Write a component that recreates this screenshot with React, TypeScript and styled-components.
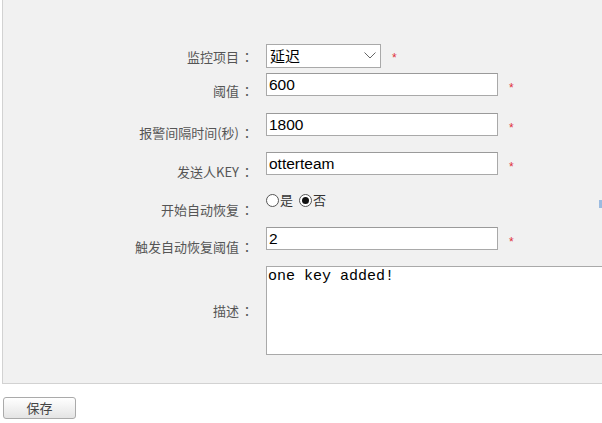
import React from "react";
import styled, { createGlobalStyle } from "styled-components";

const GlobalStyle = createGlobalStyle`
  html, body {
    margin: 0;
    padding: 0;
    background: #ffffff;
    overflow: hidden;
    font-family: "Noto Sans CJK SC", "Liberation Sans", sans-serif;
  }
  * { box-sizing: border-box; }
`;

const Page = styled.div`
  padding-left: 2px;
  width: 720px;
`;

const Panel = styled.div`
  width: 680px;
  background: #f1f1f1;
  border: 1px solid #d2d2d2;
  border-top: none;
  padding: 43px 0 28px 0;
`;

const Row = styled.div`
  display: grid;
  grid-template-columns: 252px 1fr;
  column-gap: 11px;
  align-items: center;
`;

const Label = styled.div<{ $shift?: number }>`
  text-align: right;
  font-family: "Noto Sans CJK SC", "Liberation Sans", sans-serif;
  font-size: 13px;
  line-height: 16px;
  color: #555555;
  white-space: nowrap;
  margin-bottom: ${(p) => p.$shift ?? 0}px;
`;

const Colon = styled.span`
  display: inline-block;
  width: 16px;
  text-align: center;
  font-family: "Noto Sans CJK TC", "Noto Sans CJK SC", sans-serif;
`;

const Field = styled.div<{ $pb: number }>`
  display: flex;
  align-items: flex-start;
  align-self: start;
  padding-bottom: ${(p) => p.$pb}px;
`;

const TextInput = styled.input`
  width: 232px;
  height: 23px;
  border: 1px solid #a9a9a9;
  border-top-color: #9a9a9a;
  background: #ffffff;
  padding: 0 2px;
  margin: 0;
  font-family: "Liberation Sans", Arial, sans-serif;
  font-size: 15.5px;
  color: #000000;
  outline: none;
`;

const SelectWrap = styled.div`
  position: relative;
  width: 115px;
  height: 24px;
`;

const Select = styled.select`
  appearance: none;
  -webkit-appearance: none;
  width: 115px;
  height: 24px;
  border: 1px solid #a9a9a9;
  background: #ffffff;
  padding: 0 3px;
  margin: 0;
  font-family: "Noto Sans CJK SC", "Liberation Sans", sans-serif;
  font-size: 15px;
  color: #000000;
  outline: none;
`;

const Chevron = styled.svg`
  position: absolute;
  right: 5px;
  top: 9px;
  width: 12px;
  height: 7px;
  pointer-events: none;
`;

const Required = styled.span`
  margin-left: 11px;
  padding-top: 9px;
  font-family: "Liberation Sans", Arial, sans-serif;
  font-size: 12px;
  line-height: 12px;
  color: #e0303a;
`;

const RadioGroup = styled.div`
  display: flex;
  align-items: center;
  height: 16px;
`;

const RadioLabel = styled.label`
  display: flex;
  align-items: center;
  margin-right: 6px;
  font-family: "Noto Sans CJK SC", sans-serif;
  font-size: 13px;
  line-height: 16px;
  color: #333333;
`;

const Radio = styled.input`
  appearance: none;
  -webkit-appearance: none;
  width: 13px;
  height: 13px;
  margin: 0 1px 0 0;
  border: 1px solid #555555;
  border-radius: 50%;
  background: #ffffff;
  display: grid;
  place-content: center;
  &::before {
    content: "";
    width: 7px;
    height: 7px;
    border-radius: 50%;
    background: transparent;
  }
  &:checked::before {
    background: #111111;
  }
`;

const HelpMark = styled.span`
  margin-left: 267px;
  margin-top: 8px;
  width: 4px;
  height: 8px;
  background: #9cbbe0;
`;

const TextArea = styled.textarea`
  width: 380px;
  height: 89px;
  border: 1px solid #a9a9a9;
  background: #ffffff;
  padding: 1px 1px;
  margin: 0;
  resize: none;
  font-family: "Liberation Mono", "Courier New", monospace;
  font-size: 15px;
  line-height: 17px;
  color: #000000;
  outline: none;
`;

const SaveButton = styled.button`
  margin: 13px 0 0 1px;
  width: 73px;
  height: 22px;
  border: 1px solid #aaaaaa;
  border-radius: 3px;
  background: linear-gradient(#ffffff, #e4e4e4);
  font-family: "Noto Sans CJK SC", sans-serif;
  font-size: 13px;
  line-height: 16px;
  color: #444444;
  padding: 0;
`;

export default function App() {
  return (
    <>
      <GlobalStyle />
      <Page>
        <Panel>
          <Row>
            <Label $shift={2}>监控项目<Colon>：</Colon></Label>
            <Field $pb={6}>
              <SelectWrap>
                <Select defaultValue="delay">
                  <option value="delay">延迟</option>
                </Select>
                <Chevron viewBox="0 0 12 7">
                  <path d="M0.5 0.5 L6 6 L11.5 0.5" fill="none" stroke="#666" strokeWidth="1" />
                </Chevron>
              </SelectWrap>
              <Required>*</Required>
            </Field>
          </Row>
          <Row>
            <Label $shift={4}>阈值<Colon>：</Colon></Label>
            <Field $pb={17}>
              <TextInput defaultValue="600" />
              <Required>*</Required>
            </Field>
          </Row>
          <Row>
            <Label>报警间隔时间(秒)<Colon>：</Colon></Label>
            <Field $pb={16}>
              <TextInput defaultValue="1800" />
              <Required>*</Required>
            </Field>
          </Row>
          <Row>
            <Label>发送人KEY<Colon>：</Colon></Label>
            <Field $pb={17}>
              <TextInput defaultValue="otterteam" />
              <Required>*</Required>
            </Field>
          </Row>
          <Row>
            <Label>开始自动恢复<Colon>：</Colon></Label>
            <Field $pb={19}>
              <RadioGroup>
                <RadioLabel>
                  <Radio type="radio" name="autoRecover" value="yes" />是
                </RadioLabel>
                <RadioLabel>
                  <Radio type="radio" name="autoRecover" value="no" defaultChecked />否
                </RadioLabel>
              </RadioGroup>
              <HelpMark />
            </Field>
          </Row>
          <Row>
            <Label>触发自动恢复阈值<Colon>：</Colon></Label>
            <Field $pb={16}>
              <TextInput defaultValue="2" />
              <Required>*</Required>
            </Field>
          </Row>
          <Row>
            <Label>描述<Colon>：</Colon></Label>
            <Field $pb={0}>
              <TextArea defaultValue="one key added!" />
            </Field>
          </Row>
        </Panel>
        <SaveButton>保存</SaveButton>
      </Page>
    </>
  );
}
